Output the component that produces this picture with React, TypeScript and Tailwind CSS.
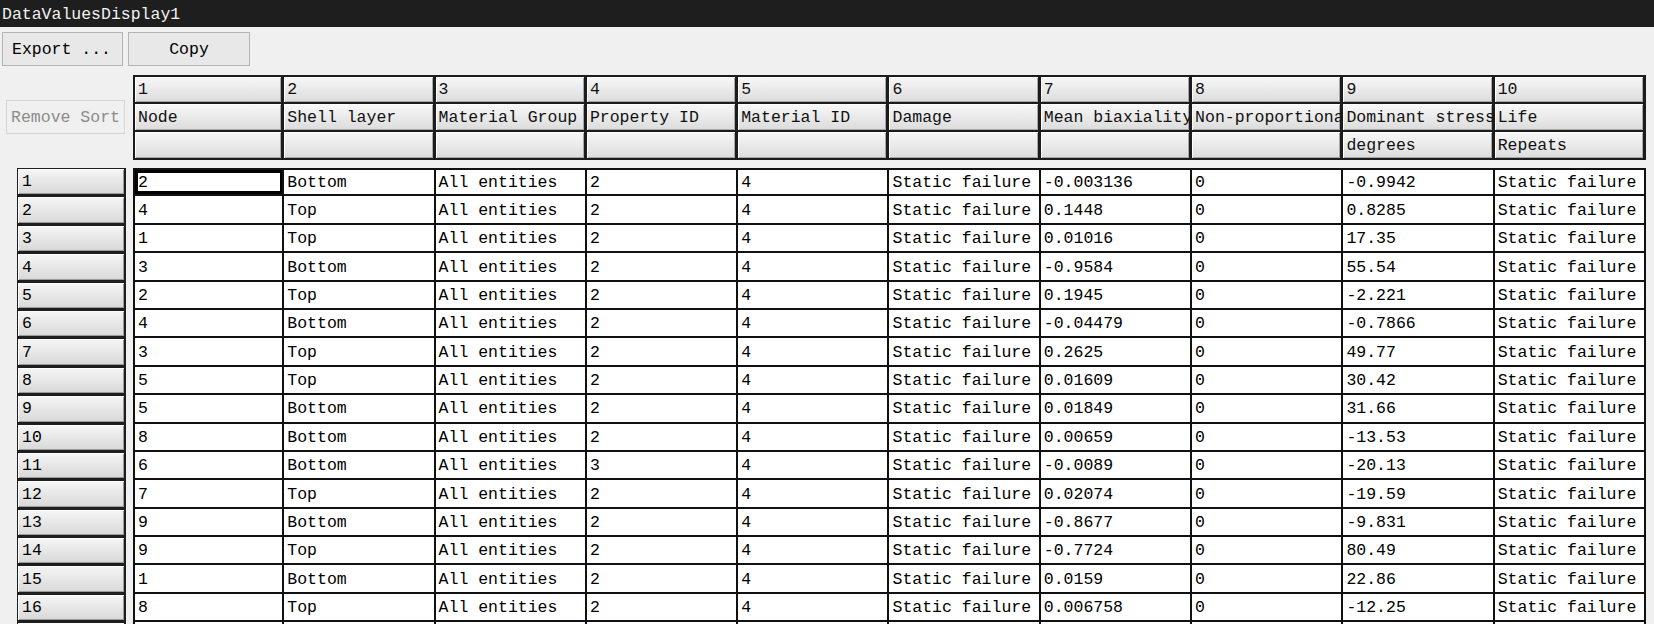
import React from 'react';

const headerIds = ['1', '2', '3', '4', '5', '6', '7', '8', '9', '10'];
const headerNames = [
  'Node',
  'Shell layer',
  'Material Group',
  'Property ID',
  'Material ID',
  'Damage',
  'Mean biaxiality',
  'Non-proportional',
  'Dominant stress',
  'Life',
];
const headerUnits = ['', '', '', '', '', '', '', '', 'degrees', 'Repeats'];

// node, layer, property id, mean biaxiality, dominant stress
const raw: [string, string, string, string, string][] = [
  ['2', 'Bottom', '2', '-0.003136', '-0.9942'],
  ['4', 'Top', '2', '0.1448', '0.8285'],
  ['1', 'Top', '2', '0.01016', '17.35'],
  ['3', 'Bottom', '2', '-0.9584', '55.54'],
  ['2', 'Top', '2', '0.1945', '-2.221'],
  ['4', 'Bottom', '2', '-0.04479', '-0.7866'],
  ['3', 'Top', '2', '0.2625', '49.77'],
  ['5', 'Top', '2', '0.01609', '30.42'],
  ['5', 'Bottom', '2', '0.01849', '31.66'],
  ['8', 'Bottom', '2', '0.00659', '-13.53'],
  ['6', 'Bottom', '3', '-0.0089', '-20.13'],
  ['7', 'Top', '2', '0.02074', '-19.59'],
  ['9', 'Bottom', '2', '-0.8677', '-9.831'],
  ['9', 'Top', '2', '-0.7724', '80.49'],
  ['1', 'Bottom', '2', '0.0159', '22.86'],
  ['8', 'Top', '2', '0.006758', '-12.25'],
  ['', '', '', '', ''],
];

const rows = raw.map(([node, layer, prop, biax, dom]) =>
  node === ''
    ? ['', '', '', '', '', '', '', '', '', '']
    : [node, layer, 'All entities', prop, '4', 'Static failure', biax, '0', dom, 'Static failure']
);

const HeaderCell = ({ text, col, row }: { text: string; col: number; row: number }) => (
  <div
    className={`flex items-center overflow-hidden whitespace-nowrap pl-[3px] pt-[3px] border-[#1c1c1c] border-r-[3px] border-b-[2px] bg-linear-to-b from-[#f8f8f8] to-[#dcdcdc] shadow-[inset_1px_1px_0_#ffffff,inset_-1px_-1px_0_#a8a8a8] text-[#111] ${
      col === 0 ? 'border-l-[2px]' : ''
    } ${row === 0 ? 'border-t-[2px]' : ''}`}
  >
    {text}
  </div>
);

export default function App() {
  return (
    <div className="w-[1654px] h-[624px] overflow-hidden bg-[#f0f0f0] font-['Liberation_Mono',monospace] text-[16.5px] text-black">
      <div className="h-[27px] bg-[#1e1e1e] text-[#f2f2f2] flex items-center pl-[2px] pt-[3px]">
        DataValuesDisplay1
      </div>

      <div className="h-[48px] pt-[5px] pl-[2px] flex gap-[5px]">
        <button className="w-[121px] h-[34px] border border-[#b4b4b4] bg-[#e8e8e8] text-left pl-[9px] pt-[2px]">
          Export ...
        </button>
        <button className="w-[122px] h-[34px] border border-[#b4b4b4] bg-[#e8e8e8] pt-[2px]">Copy</button>
      </div>

      <div className="flex h-[85px]">
        <div className="w-[133px] shrink-0 pt-[25px] pl-[6px]">
          <div className="w-[119px] h-[34px] border border-[#d4d4d4] flex items-center justify-center pt-[2px] text-[#8c8c8c]">
            Remove Sort
          </div>
        </div>
        <div className="grid grid-cols-[repeat(10,151.3px)] grid-rows-[28.5px_28.5px_28px]">
          {headerIds.map((t, i) => (
            <HeaderCell key={`id-${i}`} text={t} col={i} row={0} />
          ))}
          {headerNames.map((t, i) => (
            <HeaderCell key={`nm-${i}`} text={t} col={i} row={1} />
          ))}
          {headerUnits.map((t, i) => (
            <HeaderCell key={`un-${i}`} text={t} col={i} row={2} />
          ))}
        </div>
      </div>

      <div className="mt-[8px]">
        {rows.map((cells, r) => (
          <div key={r} className="flex h-[28.4px]">
            <div className="w-[133px] shrink-0 pl-[17px] pr-[7px]">
              <div className="h-full flex items-center pl-[4px] pt-[2px] border-[#1e1e1e] border-t border-l border-r-2 border-b-2 bg-linear-to-b from-[#f6f6f6] to-[#d8d8d8] shadow-[inset_1px_1px_0_#ffffff,inset_-1px_-1px_0_#9a9a9a]">
                {cells[0] === '' ? '' : r + 1}
              </div>
            </div>
            <div className="grid grid-cols-[repeat(10,151.3px)]">
              {cells.map((c, i) => (
                <div
                  key={i}
                  className={`flex items-center overflow-hidden whitespace-nowrap pl-[3px] pt-[3px] bg-white border-[#111] border-r-2 border-b-2 ${
                    i === 0 ? 'border-l-2' : ''
                  } ${r === 0 ? 'border-t-2' : ''} ${
                    r === 0 && i === 0 ? 'shadow-[inset_3px_3px_0_#000,inset_-2px_-3px_0_#000]' : ''
                  }`}
                >
                  {c}
                </div>
              ))}
            </div>
          </div>
        ))}
      </div>
    </div>
  );
}
